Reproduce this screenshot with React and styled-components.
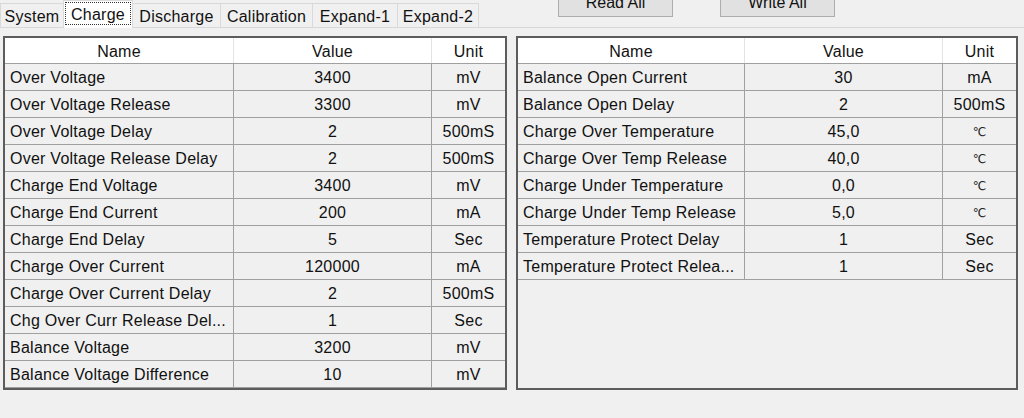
import React from 'react';
import styled, { createGlobalStyle, css } from 'styled-components';

const GlobalStyle = createGlobalStyle`
    html, body {
        margin: 0;
        padding: 0;
        background: #f0f0f0;
        overflow: hidden;
    }
    body {
        font-family: "Liberation Sans", Arial, "DejaVu Sans", sans-serif;
        font-size: 16px;
        letter-spacing: 0.25px;
        color: #111;
    }
`

const Window = styled.div`
    width: 1024px;
    height: 418px;
    background: #f0f0f0;
    overflow: hidden;
`

const TopBar = styled.div`
    display: flex;
    align-items: flex-end;
    height: 27px;
`

const TabStrip = styled.div`
    display: flex;
    align-items: flex-end;
    height: 27px;
`

const Tab = styled.div`
    display: flex;
    align-items: center;
    justify-content: center;
    width: ${props => props.$w}px;
    height: 24px;
    padding-top: 1px;
    margin-right: -1px;
    background: #f0f0f0;
    border: 1px solid #d9d9d9;
    border-bottom: none;
    box-sizing: border-box;
    cursor: default;
    ${props => props.$active && css`
        position: relative;
        z-index: 1;
        align-items: stretch;
        height: 28px;
        margin-bottom: -1px;
        padding: 1px 1px 3px 1px;
        background: #fff;
    `}
`

const TabLabel = styled.span`
    display: flex;
    align-items: center;
    justify-content: center;
    flex: ${props => props.$focus ? 1 : 'none'};
    padding-top: 1px;
    border: 1px dotted ${props => props.$focus ? '#333' : 'transparent'};
    line-height: 19px;
`

const ButtonGroup = styled.div`
    display: flex;
    gap: 47px;
    margin-left: 80px;
    align-self: flex-start;
`

const Button = styled.button`
    width: 115px;
    height: 28px;
    margin-top: -11px;
    background: #e1e1e1;
    border: 1px solid #adadad;
    font: inherit;
    color: #111;
    padding: 0;
`

const Panel = styled.div`
    border-top: 1px solid #d8d8d8;
    display: flex;
    gap: 9px;
    padding: 8px 0 0 3px;
`

const Grid = styled.div`
    width: ${props => props.$width}px;
    height: 354px;
    box-sizing: border-box;
    border: 2px solid #5c5c5c;
    background: #f0f0f0;
    overflow: hidden;
`

const Row = styled.div`
    display: grid;
    grid-template-columns: ${props => props.$cols};
    height: 27px;
    box-sizing: border-box;
    border-bottom: 1px solid #a0a0a0;
    background: #f0f0f0;
`

const HeaderRow = styled(Row)`
    height: 26px;
    background: #fff;
`

const Cell = styled.div`
    display: flex;
    align-items: center;
    justify-content: ${props => props.$align || 'center'};
    padding: 2px 5px 0 5px;
    border-right: 1px solid #a0a0a0;
    white-space: nowrap;
    overflow: hidden;
    &:last-child {
        border-right: none;
    }
`

const HeaderCell = styled(Cell)`
    border-right-color: #e3e3e3;
`

const Degree = styled.span`
    font-size: 12px;
    letter-spacing: 0;
    color: #222;
`

const leftRows = [
    ['Over Voltage', '3400', 'mV'],
    ['Over Voltage Release', '3300', 'mV'],
    ['Over Voltage Delay', '2', '500mS'],
    ['Over Voltage Release Delay', '2', '500mS'],
    ['Charge End Voltage', '3400', 'mV'],
    ['Charge End Current', '200', 'mA'],
    ['Charge End Delay', '5', 'Sec'],
    ['Charge Over Current', '120000', 'mA'],
    ['Charge Over Current Delay', '2', '500mS'],
    ['Chg Over Curr Release Del...', '1', 'Sec'],
    ['Balance Voltage', '3200', 'mV'],
    ['Balance Voltage Difference', '10', 'mV'],
]

const rightRows = [
    ['Balance Open Current', '30', 'mA'],
    ['Balance Open Delay', '2', '500mS'],
    ['Charge Over Temperature', '45,0', '℃'],
    ['Charge Over Temp Release', '40,0', '℃'],
    ['Charge Under Temperature', '0,0', '℃'],
    ['Charge Under Temp Release', '5,0', '℃'],
    ['Temperature Protect Delay', '1', 'Sec'],
    ['Temperature Protect Relea...', '1', 'Sec'],
]

const tabs = [
    { label: 'System', w: 64 },
    { label: 'Charge', w: 70 },
    { label: 'Discharge', w: 89 },
    { label: 'Calibration', w: 93 },
    { label: 'Expand-1', w: 86 },
    { label: 'Expand-2', w: 82 },
]

const ParamGrid = ({ rows, width, nameWidth }) => {
    const cols = `${nameWidth}px 198px 1fr`
    return (
        <Grid $width={width}>
            <HeaderRow $cols={cols}>
                <HeaderCell>Name</HeaderCell>
                <HeaderCell>Value</HeaderCell>
                <HeaderCell>Unit</HeaderCell>
            </HeaderRow>
            {rows.map(([name, value, unit]) => (
                <Row key={name} $cols={cols}>
                    <Cell $align="flex-start">{name}</Cell>
                    <Cell>{value}</Cell>
                    <Cell>{unit === '℃' ? <Degree>{unit}</Degree> : unit}</Cell>
                </Row>
            ))}
        </Grid>
    )
}

const App = () => {
    return (
        <>
            <GlobalStyle />
            <Window>
                <TopBar>
                    <TabStrip>
                        {tabs.map(t => (
                            <Tab key={t.label} $w={t.w} $active={t.label === 'Charge'}>
                                <TabLabel $focus={t.label === 'Charge'}>{t.label}</TabLabel>
                            </Tab>
                        ))}
                    </TabStrip>
                    <ButtonGroup>
                        <Button>Read All</Button>
                        <Button>Write All</Button>
                    </ButtonGroup>
                </TopBar>
                <Panel>
                    <ParamGrid rows={leftRows} width={504} nameWidth={229} />
                    <ParamGrid rows={rightRows} width={502} nameWidth={227} />
                </Panel>
            </Window>
        </>
    )
}

export default App
